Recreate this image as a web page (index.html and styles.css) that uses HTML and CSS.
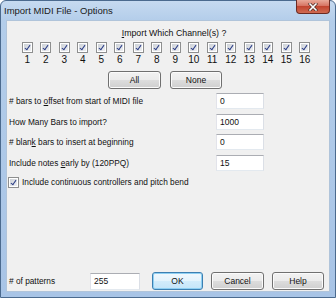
FILE: index.html
```html
<!DOCTYPE html>
<html lang="en">
<head>
    <meta charset="UTF-8">
    <title>Import MIDI File - Options</title>
    <link rel="stylesheet" href="styles.css">
</head>
<body>
    <div class="window">
        <div class="titlebar">
            <span class="title">Import MIDI File - Options</span>
            <span class="close">
                <svg width="10" height="8" viewBox="0 0 10 8">
                    <path d="M2 1L8 7M8 1L2 7" stroke="#4a2a24" stroke-width="3" stroke-linecap="square"/>
                    <path d="M2 1L8 7M8 1L2 7" stroke="#ffffff" stroke-width="1.6" stroke-linecap="square"/>
                </svg>
            </span>
        </div>

        <div class="client">
            <div class="heading"><u>I</u>mport Which Channel(s) ?</div>

            <div class="channels">
                <div class="channel"><span class="check"></span><span class="num">1</span></div>
                <div class="channel"><span class="check"></span><span class="num">2</span></div>
                <div class="channel"><span class="check"></span><span class="num">3</span></div>
                <div class="channel"><span class="check"></span><span class="num">4</span></div>
                <div class="channel"><span class="check"></span><span class="num">5</span></div>
                <div class="channel"><span class="check"></span><span class="num">6</span></div>
                <div class="channel"><span class="check"></span><span class="num">7</span></div>
                <div class="channel"><span class="check"></span><span class="num">8</span></div>
                <div class="channel"><span class="check"></span><span class="num">9</span></div>
                <div class="channel"><span class="check"></span><span class="num">10</span></div>
                <div class="channel"><span class="check"></span><span class="num">11</span></div>
                <div class="channel"><span class="check"></span><span class="num">12</span></div>
                <div class="channel"><span class="check"></span><span class="num">13</span></div>
                <div class="channel"><span class="check"></span><span class="num">14</span></div>
                <div class="channel"><span class="check"></span><span class="num">15</span></div>
                <div class="channel"><span class="check"></span><span class="num">16</span></div>
            </div>

            <div class="select-buttons">
                <button class="btn btn-all">All</button>
                <button class="btn btn-none">None</button>
            </div>

            <div class="fields">
                <span class="label"># bars to <u>o</u>ffset from start of MIDI file</span>
                <span class="field">0</span>
                <span class="label">How Many Bars to import?</span>
                <span class="field">1000</span>
                <span class="label"># blan<u>k</u> bars to insert at beginning</span>
                <span class="field">0</span>
                <span class="label">Include notes <u>e</u>arly by (120PPQ)</span>
                <span class="field">15</span>
            </div>

            <div class="option">
                <span class="check"></span>
                <span class="label">Include continuous controllers and pitch bend</span>
            </div>

            <div class="footer">
                <span class="label footer-label"># of patterns</span>
                <span class="field footer-field">255</span>
                <button class="btn btn-ok">OK</button>
                <button class="btn btn-cancel">Cancel</button>
                <button class="btn btn-help">Help</button>
            </div>
        </div>
    </div>
</body>
</html>
```

FILE: styles.css
```css
* {
    box-sizing: border-box;
    margin: 0;
    padding: 0;
}

body {
    font-family: 'Liberation Sans', Arial, sans-serif;
    background-color: #ffffff;
}

.window {
    width: 336px;
    height: 298px;
    border: 1px solid #4b6a8e;
    border-radius: 6px 6px 0 0;
    background: linear-gradient(#c6daf0, #b3cdea 20px, #a8c4e6 100%);
    display: flex;
    flex-direction: column;
}

.titlebar {
    height: 19px;
    display: flex;
    justify-content: space-between;
    align-items: flex-start;
    flex-shrink: 0;
    padding: 0 5px 0 3px;
}

.title {
    font-size: 9.5px;
    line-height: 19px;
    color: #1a1a1a;
}

.close {
    width: 34px;
    height: 14px;
    margin-top: -1px;
    border: 1px solid #6b2a22;
    border-top: none;
    border-radius: 0 0 4px 4px;
    background: linear-gradient(#e9a999, #d67362 45%, #c24530 50%, #cf6a52 100%);
    display: flex;
    align-items: center;
    justify-content: center;
}

.client {
    flex: 1;
    margin: 0 5px 5px 5px;
    background-color: #f0f0f0;
    border: 1px solid #b0c4da;
    display: flex;
    flex-direction: column;
    padding-bottom: 1px;
    font-size: 8.3px;
    color: #111;
}

.heading {
    margin-top: 6px;
    line-height: 12px;
    text-align: center;
    padding-left: 12px;
    font-size: 8.8px;
}

.channels {
    display: grid;
    grid-template-columns: repeat(16, 18.5px);
    margin-top: 3px;
    margin-left: 11px;
}

.channel {
    display: flex;
    flex-direction: column;
    align-items: center;
    gap: 1px;
}

.num {
    font-size: 10px;
    line-height: 11px;
}

.check {
    width: 11px;
    height: 11px;
    border: 1px solid #8e8f8f;
    background: linear-gradient(135deg, #c9ced4, #f2f3f5);
    box-shadow: inset 0 0 0 1px #fff;
    position: relative;
    flex-shrink: 0;
}

.check::after {
    content: "";
    position: absolute;
    left: 3px;
    top: 1px;
    width: 2px;
    height: 5px;
    border: solid #2b3d86;
    border-width: 0 1.5px 1.5px 0;
    transform: rotate(35deg);
}

.select-buttons {
    display: flex;
    justify-content: center;
    gap: 9px;
    margin-top: 6px;
    padding-right: 6px;
}

.btn {
    height: 18px;
    font-family: inherit;
    font-size: 8.5px;
    color: #111;
    border: 1px solid #707070;
    border-radius: 3px;
    background: linear-gradient(#f2f2f2 0%, #ebebeb 50%, #dddddd 50%, #cfcfcf 100%);
    box-shadow: inset 0 0 0 1px #fbfbfb;
}

.btn-all {
    width: 53px;
}

.btn-none {
    width: 52px;
}

.fields {
    display: grid;
    grid-template-columns: 207px 48px;
    row-gap: 4.5px;
    margin-top: 4px;
    padding-left: 2px;
    align-items: center;
}

.field {
    height: 16px;
    background-color: #fff;
    border: 1px solid;
    border-color: #abadb3 #dbdfe6 #e3e9ef #e2e3ea;
    padding-left: 3px;
    line-height: 14px;
    font-size: 8.5px;
}

.option {
    display: flex;
    align-items: center;
    gap: 3px;
    margin-top: 6px;
    padding-left: 1px;
}

.footer {
    margin-top: auto;
    display: flex;
    align-items: center;
    padding-left: 2px;
}

.footer-label {
    width: 81px;
}

.footer-field {
    width: 50px;
    height: 17px;
    line-height: 15px;
}

.btn-ok {
    width: 51px;
    margin-left: 12px;
    border-color: #3c7fb1;
    background: linear-gradient(#f1f8fd, #e3f3fc 50%, #d2ecfb 50%, #c4e5f9 100%);
    box-shadow: inset 0 0 0 1px #8fd0f3;
}

.btn-cancel {
    width: 53px;
    margin-left: 8px;
}

.btn-help {
    width: 52px;
    margin-left: 8px;
}
```
